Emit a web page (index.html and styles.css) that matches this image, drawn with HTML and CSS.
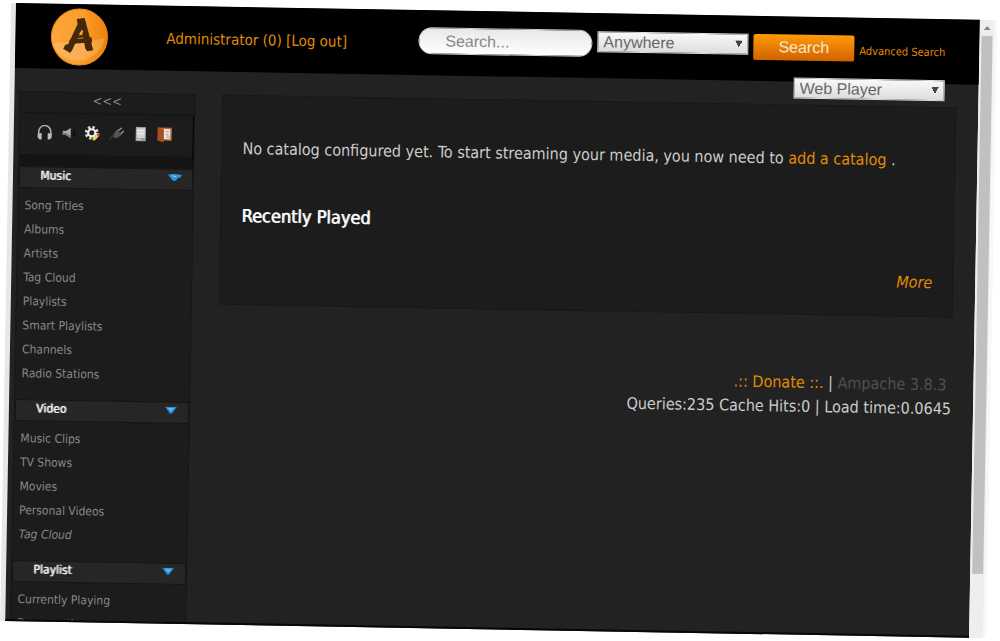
FILE: index.html
```html
<!DOCTYPE html>
<html lang="en">
<head>
    <meta charset="UTF-8">
    <meta name="viewport" content="width=device-width, initial-scale=1.0">
    <title>Ampache</title>
    <link rel="stylesheet" href="styles.css">
</head>
<body>
    <div class="window">
        <div class="page">
            <header class="header">
                <a class="logo" href="#" aria-label="Ampache">
                    <svg width="58" height="58" viewBox="0 0 58 58">
                        <defs>
                            <linearGradient id="disc" x1="0" y1="0" x2="1" y2="0">
                                <stop offset="0" stop-color="#fca63c"/>
                                <stop offset="0.55" stop-color="#fb9d2c"/>
                                <stop offset="1" stop-color="#ee8408"/>
                            </linearGradient>
                        </defs>
                        <circle cx="29" cy="29" r="28" fill="url(#disc)" stroke="#ef8d1c"/>
                        <path d="M3 35 Q28 35 54 30 A27 27 0 0 1 3 37 Z" fill="#fff" opacity="0.18"/>
                        <g fill="#45270a">
                            <path d="M26 11 L33 10 L34 15 L22 42 L20 45 L13 41 L15 37 L18 36 L27 16 Z"/>
                            <path d="M29 11 L34 10 L43 42 L37 43 L35 40 Z"/>
                            <path d="M19 32 L41 29 L42 34 L20 36 Z"/>
                            <path d="M24 28 L37 26 L38 28 L24 31 Z"/>
                        </g>
                        <path d="M30 18 L32 22 L28 26 L33 24 Z" fill="#fba03a"/>
                    </svg>
                </a>
                <div class="user">
                    <a href="#">Administrator</a> <a href="#">(0)</a> <a href="#">[Log out]</a>
                </div>
                <form class="search">
                    <input class="search-text" type="text" placeholder="Search..." aria-label="Search">
                    <select class="select search-type" aria-label="Search in">
                        <option>Anywhere</option>
                    </select>
                    <button class="search-button" type="button">Search</button>
                    <a class="advanced" href="#">Advanced Search</a>
                </form>
                <select class="select play-type" aria-label="Play type">
                    <option>Web Player</option>
                </select>
            </header>

            <div class="columns">
                <nav class="sidebar">
                    <a class="toggle" href="#">&lt;&lt;&lt;</a>
                    <div class="tabs">
                        <a href="#" aria-label="Home">
                            <svg width="16" height="16" viewBox="0 0 16 16">
                                <path d="M2 11 V7 A6 6 0 0 1 14 7 V11" fill="none" stroke="#aaa" stroke-width="1.6"/>
                                <path d="M1 9 L5 8.500 V15 L3 15 L1 13 Z M15 9 L11 8.500 V15 L13 15 L15 13 Z" fill="#bbb"/>
                            </svg>
                        </a>
                        <a href="#" aria-label="Localplay">
                            <svg width="16" height="16" viewBox="0 0 16 16">
                                <path d="M2 6 H5 L10 3 V13 L5 10 H2 Z" fill="#aaa"/>
                                <path d="M2 8 H5 L10 11 V13 L5 10 H2 Z" fill="#75757c"/>
                                <path d="M13 5 Q15 8 13 11" fill="none" stroke="#0c0c0c" stroke-width="1.5"/>
                            </svg>
                        </a>
                        <a href="#" aria-label="Preferences">
                            <svg width="16" height="16" viewBox="0 0 16 16">
                                <circle cx="7" cy="7.500" r="5.500" fill="none" stroke="#ddd" stroke-width="3" stroke-dasharray="2.300 2"/>
                                <circle cx="7" cy="7.500" r="3.600" fill="#222" stroke="#eee" stroke-width="2.200"/>
                                <path d="M8 15 L8 12 L12 9 L14 11 L10 15 Z" fill="#e8d45c"/>
                                <path d="M12 9 L14 7 L15.500 9 L14 11 Z" fill="#dc3b30"/>
                            </svg>
                        </a>
                        <a href="#" aria-label="Modules">
                            <svg width="16" height="16" viewBox="0 0 16 16">
                                <path d="M1 15 Q2 10 6 10" fill="none" stroke="#383838" stroke-width="1.5"/>
                                <path d="M5 8 L8 4 L13 9 L9 12 L5 12 Z" fill="#555"/>
                                <path d="M9 5 L13 2 M12 8 L15 5" stroke="#888" stroke-width="1.5"/>
                            </svg>
                        </a>
                        <a href="#" aria-label="Admin">
                            <svg width="16" height="16" viewBox="0 0 16 16">
                                <rect x="3.500" y="1.500" width="9" height="13" fill="#d4d4d4" stroke="#aaa"/>
                                <path d="M4 4.500 H12 M4 7.500 H12" stroke="#eee"/>
                                <path d="M4 12.500 H12" stroke="#999"/>
                                <path d="M9 13 H12" stroke="#3fa33f"/>
                            </svg>
                        </a>
                        <a href="#" aria-label="Log out">
                            <svg width="16" height="16" viewBox="0 0 16 16">
                                <path d="M1 1 H15 V14 H1 Z" fill="#c66a34"/>
                                <path d="M7 2.500 H13.500 V12.500 H7 Z" fill="#e5e5e5"/>
                                <path d="M1 1 L7 3 V16 L1 14 Z" fill="#a84f22"/>
                                <path d="M9 5 H12 M9 8 H12 M10 10.500 H13" stroke="#999"/>
                            </svg>
                        </a>
                    </div>

                    <section class="group">
                        <h4 class="group-title">Music
                            <svg width="14" height="8" viewBox="0 0 14 8"><path d="M0 1 L5 0 L14 1 L12 4 L10 4 L8 7 L5 7 Z" fill="#2c93dc"/><path d="M3 2 L7 2 L9 4 Z M8 2 L12 2" fill="#8fd0fa"/></svg>
                        </h4>
                        <ul>
                            <li><a href="#">Song Titles</a></li>
                            <li><a href="#">Albums</a></li>
                            <li><a href="#">Artists</a></li>
                            <li><a href="#">Tag Cloud</a></li>
                            <li><a href="#">Playlists</a></li>
                            <li><a href="#">Smart Playlists</a></li>
                            <li><a href="#">Channels</a></li>
                            <li><a href="#">Radio Stations</a></li>
                        </ul>
                    </section>
                    <section class="group">
                        <h4 class="group-title">Video
                            <svg width="14" height="8" viewBox="0 0 14 8"><path d="M1 0 H13 L8 7 H6 Z" fill="#2583cc"/><path d="M3 1 H11 L7 5 Z" fill="#5db8f2"/></svg>
                        </h4>
                        <ul>
                            <li><a href="#">Music Clips</a></li>
                            <li><a href="#">TV Shows</a></li>
                            <li><a href="#">Movies</a></li>
                            <li><a href="#">Personal Videos</a></li>
                            <li><a href="#"><em>Tag Cloud</em></a></li>
                        </ul>
                    </section>
                    <section class="group">
                        <h4 class="group-title">Playlist
                            <svg width="14" height="8" viewBox="0 0 14 8"><path d="M1 0 H13 L8 7 H6 Z" fill="#2583cc"/><path d="M3 1 H11 L7 5 Z" fill="#5db8f2"/></svg>
                        </h4>
                        <ul>
                            <li><a href="#">Currently Playing</a></li>
                            <li><a href="#">Democratic</a></li>
                        </ul>
                    </section>
                </nav>

                <main class="main">
                    <div class="content">
                        <p>No catalog configured yet. To start streaming your media, you now need to <a href="#">add a catalog</a> .</p>
                        <h3>Recently Played</h3>
                        <a class="more" href="#">More</a>
                    </div>
                    <footer class="footer">
                        <div class="links"><a href="#">.:: Donate ::.</a> | <a class="version" href="#">Ampache 3.8.3</a></div>
                        <div>Queries:235 Cache Hits:0 | Load time:0.0645</div>
                    </footer>
                </main>
            </div>
        </div>
        <div class="scrollbar">
            <svg width="7" height="4" viewBox="0 0 7 4"><path d="M0 4 L3.500 0 L7 4 Z" fill="#888"/></svg>
            <div class="thumb"></div>
        </div>
    </div>
</body>
</html>
```
FILE: styles.css
```css
* {
    box-sizing: border-box;
}

body {
    margin: 0;
    height: 100vh;
    overflow: hidden;
    background: #fff;
    color: #ccc;
    font-family: "DejaVu Sans Condensed", "DejaVu Sans", sans-serif;
    font-size: 16px;
}

a {
    color: #e08b00;
    text-decoration: none;
}

ul {
    list-style: none;
    margin: 0;
    padding: 0;
}

/* the whole browser window leans slightly to the right */
.window {
    display: flex;
    height: calc(100vh - 23px);
    margin: 3px 3px 0 11px;
    border-left: 5px solid #e6e8e8;
    transform: rotate(1deg);
    transform-origin: 5px 0;
}

.page {
    flex: 1;
    min-width: 0;
    overflow: hidden;
    background: #222;
    border-bottom: 2px solid #080808;
}

/* header */
.header {
    position: relative;
    display: flex;
    align-items: center;
    height: 65px;
    padding: 0 34px 0 35px;
    background: #000;
}

.logo svg {
    display: block;
}

.user {
    margin-left: 58px;
    font-size: 15px;
}

.search {
    display: flex;
    align-items: center;
    gap: 5px;
    margin: 0 0 4px auto;
}

.search-text {
    width: 174px;
    height: 27px;
    padding: 0 26px;
    border: 1px solid #ccc;
    border-radius: 14px;
    background: linear-gradient(#e8e8e8, #fff);
    font: 16px "Liberation Sans", sans-serif;
}

.search-text::placeholder {
    color: #888;
}

.select {
    appearance: none;
    width: 151px;
    height: 21px;
    padding: 0 5px;
    border: 1px solid #ddd;
    border-radius: 0;
    background:
        conic-gradient(from -27deg at 50% 100%, #444 54deg, transparent 0) right 5px center / 7px 7px no-repeat,
        linear-gradient(#f8f8f8, #ddd);
    color: #666;
    font: 16px "Liberation Sans", sans-serif;
}

.search-type {
    margin-bottom: 4px;
}

.search-button {
    width: 101px;
    height: 26px;
    border: 0;
    border-radius: 2px;
    background: linear-gradient(#ff9a06, #d06200);
    color: #f5e6d5;
    font: 16px "Liberation Sans", sans-serif;
}

.advanced {
    margin-top: 5px;
    font-size: 11px;
}

.play-type {
    position: absolute;
    top: 61px;
    right: 34px;
}

/* columns */
.columns {
    display: flex;
    gap: 27px;
    padding: 23px 22px 0 5px;
}

.sidebar {
    flex: none;
    width: 176px;
    height: 600px;
    background: #1c1c1c;
    border: 1px solid #181818;
    font-size: 12px;
}

.sidebar a {
    color: #888;
}

.toggle {
    display: block;
    height: 21px;
    line-height: 16px;
    text-align: center;
    font-size: 13px;
    border-bottom: 1px solid #151515;
}

.tabs {
    display: flex;
    align-items: center;
    gap: 8px;
    height: 53px;
    padding: 0 17px 4px;
    border-right: 1px solid #000;
    border-bottom: 12px solid #141414;
}

.tabs svg {
    display: block;
}

.group-title {
    display: flex;
    align-items: center;
    justify-content: space-between;
    height: 22px;
    margin: 0;
    padding: 0 10px 4px 20px;
    background: #262626;
    border: 1px solid #151515;
    color: #eee;
    font-size: 12px;
    font-weight: normal;
    text-shadow: 1px 0 #ccc;
}

.group ul {
    padding: 5px 0 14px 6px;
}

.group li {
    line-height: 24px;
}

.main {
    flex: 1;
    min-width: 0;
}

.content {
    min-height: 210px;
    padding: 41px 20px 20px;
    background: #1c1c1c;
    border: 1px solid #191919;
}

.content p,
.content h3 {
    margin: 0;
    line-height: 24px;
}

.content h3 {
    margin-top: 43px;
    color: #fff;
    font-size: 18px;
    font-weight: normal;
    text-shadow: 1px 0 #ccc;
}

.more {
    display: block;
    margin-top: 31px;
    line-height: 24px;
    text-align: right;
    font-style: italic;
}

.footer {
    margin-top: 56px;
    line-height: 24px;
    text-align: right;
}

.footer .links {
    padding-right: 5px;
}

.footer .version {
    color: #505050;
}

/* scrollbar */
.scrollbar {
    display: flex;
    flex-direction: column;
    align-items: center;
    gap: 6px;
    width: 17px;
    padding: 6px 0 64px;
    background: #eee;
    border-right: 3px solid #f8f8f8;
}

.thumb {
    flex: 1;
    width: 11px;
    background: #c0c0c0;
}
```
